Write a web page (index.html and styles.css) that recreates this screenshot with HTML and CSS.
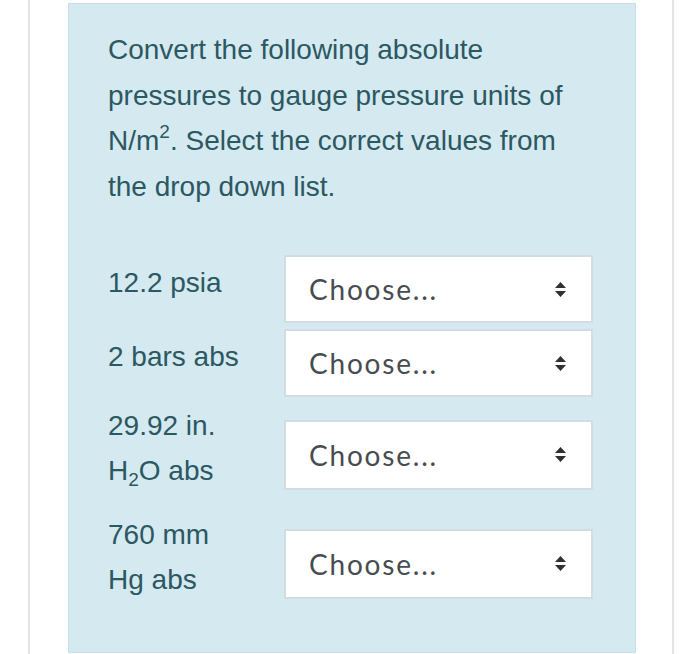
FILE: index.html
```html
<!DOCTYPE html>
<html>
<head>
<meta charset="utf-8">
<link rel="stylesheet" href="styles.css">
</head>
<body>
<div class="page">
  <div class="card">
    <p class="question">Convert the following absolute pressures to gauge pressure units of N/m<sup>2</sup>. Select the correct values from the drop down list.</p>
    <div class="rows">
      <div class="row">
        <div class="label">12.2 psia</div>
        <div class="select"><span>Choose...</span><svg class="arrow" width="13" height="17" viewBox="0 0 13 17"><path d="M6.5 1 L12 7 H1 Z M6.5 16 L12 10 H1 Z" fill="#2f3133"/></svg></div>
      </div>
      <div class="row">
        <div class="label">2 bars abs</div>
        <div class="select"><span>Choose...</span><svg class="arrow" width="13" height="17" viewBox="0 0 13 17"><path d="M6.5 1 L12 7 H1 Z M6.5 16 L12 10 H1 Z" fill="#2f3133"/></svg></div>
      </div>
      <div class="row">
        <div class="label">29.92 in.<br>H<sub>2</sub>O abs</div>
        <div class="select tall"><span>Choose...</span><svg class="arrow" width="13" height="17" viewBox="0 0 13 17"><path d="M6.5 1 L12 7 H1 Z M6.5 16 L12 10 H1 Z" fill="#2f3133"/></svg></div>
      </div>
      <div class="row">
        <div class="label">760 mm<br>Hg abs</div>
        <div class="select tall"><span>Choose...</span><svg class="arrow" width="13" height="17" viewBox="0 0 13 17"><path d="M6.5 1 L12 7 H1 Z M6.5 16 L12 10 H1 Z" fill="#2f3133"/></svg></div>
      </div>
    </div>
  </div>
</div>
</body>
</html>
```
FILE: styles.css
```css
* { box-sizing: border-box; }
html, body { margin: 0; padding: 0; background: #ffffff; }
body { width: 700px; height: 654px; overflow: hidden; }

.page {
  width: 646px;
  height: 654px;
  margin-left: 28px;
  border-left: 2px solid #e4e4e4;
  border-right: 2px solid #e4e4e4;
  padding: 3px 36px 0 38px;
}

.card {
  height: 650px;
  background: #d5e9f1;
  border: 1px solid #cae0e9;
  padding: 23px 60px 0 39px;
  font-family: "Liberation Sans", Arial, sans-serif;
  color: #2c5861;
}

.question {
  margin: 0;
  font-size: 28px;
  line-height: 45.5px;
}

.question sup {
  font-size: 19px;
  line-height: 0;
  vertical-align: 12px;
}

.rows {
  margin-top: 46px;
  display: flex;
  flex-direction: column;
  gap: 6px;
}

.row {
  display: flex;
  align-items: center;
}

.label {
  flex: 0 0 176px;
  font-size: 28px;
  line-height: 45px;
  margin-bottom: 13px;
}

.label sub {
  font-size: 19px;
  line-height: 0;
  vertical-align: -6px;
}

.select {
  flex: 0 0 309px;
  height: 68px;
  background: #ffffff;
  border: 2px solid #d3dce2;
  display: flex;
  align-items: center;
  justify-content: space-between;
  padding: 0 24px 0 23px;
  font-family: Lato, "Open Sans", sans-serif;
  font-size: 28px;
  letter-spacing: 1.8px;
  color: #474c50;
}

.select.tall { height: 70px; }

.arrow { display: block; }
```
